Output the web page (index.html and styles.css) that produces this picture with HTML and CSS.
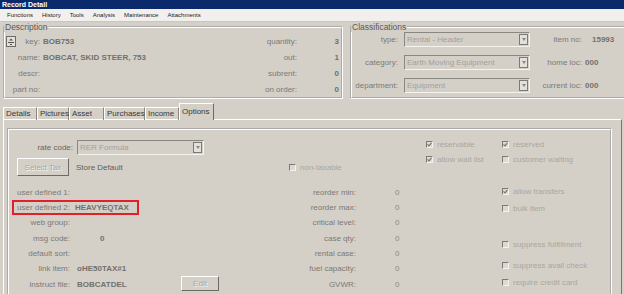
FILE: index.html
```html
<!DOCTYPE html>
<html lang="en">
<head>
    <meta charset="UTF-8">
    <title>Record Detail</title>
    <link rel="stylesheet" href="styles.css">
</head>
<body>
    <div class="titlebar">Record Detail</div>
    <div class="menubar">
        <span>Functions</span>
        <span>History</span>
        <span>Tools</span>
        <span>Analysis</span>
        <span>Maintenance</span>
        <span>Attachments</span>
    </div>

    <div class="top">
        <fieldset class="group desc">
            <legend>Description</legend>
            <div class="desc-grid">
                <div class="lbl key-cell">
                    <span class="key-btn">
                        <svg width="10" height="11" viewBox="0 0 10 11">
                            <rect x="0.5" y="0.5" width="9" height="10" fill="#e2dfda" stroke="#6e6b66"/>
                            <path d="M5 2.5 L7 4.5 L3 4.5 Z" fill="#55524e"/>
                            <path d="M2 6.5 H8" stroke="#55524e"/>
                            <path d="M4 8.5 H6" stroke="#55524e"/>
                        </svg>
                    </span>
                    <span>key:</span>
                </div>
                <div class="val">BOB753</div>
                <div class="lbl">quantity:</div>
                <div class="val num">3</div>

                <div class="lbl">name:</div>
                <div class="val">BOBCAT, SKID STEER, 753</div>
                <div class="lbl">out:</div>
                <div class="val num">1</div>

                <div class="lbl">descr:</div>
                <div class="val"></div>
                <div class="lbl">subrent:</div>
                <div class="val num">0</div>

                <div class="lbl">part no:</div>
                <div class="val"></div>
                <div class="lbl">on order:</div>
                <div class="val num">0</div>
            </div>
        </fieldset>

        <fieldset class="group classif">
            <legend>Classifications</legend>
            <div class="class-grid">
                <div class="lbl">type:</div>
                <div class="select"><span>Rental - Header</span><span class="drop"><i></i></span></div>
                <div class="lbl">item no:</div>
                <div class="val item-no">15993</div>

                <div class="lbl">category:</div>
                <div class="select"><span>Earth Moving Equipment</span><span class="drop"><i></i></span></div>
                <div class="lbl">home loc:</div>
                <div class="val">000</div>

                <div class="lbl">department:</div>
                <div class="select"><span>Equipment</span><span class="drop"><i></i></span></div>
                <div class="lbl">current loc:</div>
                <div class="val">000</div>
            </div>
        </fieldset>
    </div>

    <div class="tabs">
        <div class="tab w-details">Details</div>
        <div class="tab w-pictures">Pictures</div>
        <div class="tab w-asset">Asset</div>
        <div class="tab w-purchases">Purchases</div>
        <div class="tab w-income">Income</div>
        <div class="tab active w-options">Options</div>
    </div>

    <div class="panel">
        <div class="inner">
            <div class="col-left">
                <div class="rate-row">
                    <span class="lbl">rate code:</span>
                    <div class="select rate-select"><span>RER Formula</span><span class="drop"><i></i></span></div>
                </div>
                <div class="tax-row">
                    <button class="btn tax-btn" disabled>Select Tax</button>
                    <span class="store">Store Default</span>
                </div>
                <div class="fields">
                    <div class="field-row"><span class="lbl">user defined 1:</span><span class="val"></span></div>
                    <div class="field-row flag"><span class="lbl">user defined 2:</span><span class="val">HEAVYEQTAX</span></div>
                    <div class="field-row"><span class="lbl">web group:</span><span class="val"></span></div>
                    <div class="field-row"><span class="lbl">msg code:</span><span class="val msg">0</span></div>
                    <div class="field-row"><span class="lbl">default sort:</span><span class="val"></span></div>
                    <div class="field-row"><span class="lbl">link item:</span><span class="val">oHE50TAX#1</span></div>
                    <div class="field-row">
                        <span class="lbl">instruct file:</span><span class="val file">BOBCATDEL</span>
                        <button class="btn edit-btn" disabled>Edit</button>
                    </div>
                </div>
            </div>

            <div class="col-mid">
                <div class="mid-top">
                    <label class="cb"><span class="box"></span>non-taxable</label>
                </div>
                <div class="fields">
                    <div class="field-row"><span class="lbl">reorder min:</span><span class="val">0</span></div>
                    <div class="field-row"><span class="lbl">reorder max:</span><span class="val">0</span></div>
                    <div class="field-row"><span class="lbl">critical level:</span><span class="val">0</span></div>
                    <div class="field-row"><span class="lbl">case qty:</span><span class="val">0</span></div>
                    <div class="field-row"><span class="lbl">rental case:</span><span class="val">0</span></div>
                    <div class="field-row"><span class="lbl">fuel capacity:</span><span class="val">0</span></div>
                    <div class="field-row"><span class="lbl">GVWR:</span><span class="val">0</span></div>
                </div>
            </div>

            <div class="col-right">
                <div class="cb-col first">
                    <label class="cb"><span class="box checked"><svg width="5" height="5" viewBox="0 0 5 5"><path d="M0.5 2.3 L2 3.8 L4.5 0.8" fill="none" stroke="#7a7772" stroke-width="1.2"/></svg></span>reservable</label>
                    <label class="cb"><span class="box checked"><svg width="5" height="5" viewBox="0 0 5 5"><path d="M0.5 2.3 L2 3.8 L4.5 0.8" fill="none" stroke="#7a7772" stroke-width="1.2"/></svg></span>allow wait list</label>
                </div>
                <div class="cb-col">
                    <label class="cb"><span class="box checked"><svg width="5" height="5" viewBox="0 0 5 5"><path d="M0.5 2.3 L2 3.8 L4.5 0.8" fill="none" stroke="#7a7772" stroke-width="1.2"/></svg></span>reserved</label>
                    <label class="cb"><span class="box"></span>customer waiting</label>
                    <label class="cb gap-a"><span class="box checked"><svg width="5" height="5" viewBox="0 0 5 5"><path d="M0.5 2.3 L2 3.8 L4.5 0.8" fill="none" stroke="#7a7772" stroke-width="1.2"/></svg></span>allow transfers</label>
                    <label class="cb gap-b"><span class="box"></span>bulk item</label>
                    <label class="cb gap-c"><span class="box"></span>suppress fulfillment</label>
                    <label class="cb gap-d"><span class="box"></span>suppress avail check</label>
                    <label class="cb gap-e"><span class="box"></span>require credit card</label>
                </div>
            </div>
        </div>
    </div>
</body>
</html>
```

FILE: styles.css
```css
* {
    box-sizing: border-box;
}

body {
    margin: 0;
    width: 624px;
    height: 294px;
    overflow: hidden;
    background-color: #d4d0c8;
    font-family: "Liberation Sans", Arial, sans-serif;
    font-size: 8px;
    color: #7b7976;
}

.titlebar {
    height: 9px;
    line-height: 9px;
    padding-left: 2px;
    background-color: #0b2a6c;
    color: white;
    font-size: 7px;
    font-weight: bold;
}

.menubar {
    display: flex;
    align-items: center;
    gap: 9px;
    height: 13px;
    padding-left: 7px;
    background-color: #f1f0ee;
    border-bottom: 1px solid #c9c6c0;
    font-size: 6px;
    color: #222;
}

/* group boxes */
.top {
    display: flex;
    gap: 7px;
    padding-left: 3px;
}

.group {
    flex-shrink: 0;
    margin: 0;
    padding: 0;
    min-width: 0;
    border: 2px groove #fff;
}

.group legend {
    padding: 0 1px;
    margin-left: -1px;
    line-height: 10px;
    font-size: 8.5px;
    color: #5c5a57;
}

.desc {
    width: 340px;
}

.classif {
    width: 300px;
    padding-bottom: 4px;
}

.desc-grid {
    display: grid;
    grid-template-columns: 35px 191px 60px 39px;
    grid-auto-rows: 16px;
    column-gap: 3px;
    align-items: center;
    padding-top: 1px;
}

.lbl {
    flex-shrink: 0;
    text-align: right;
    white-space: nowrap;
}

.val {
    font-weight: bold;
    color: #72706d;
    white-space: nowrap;
}

.val.num {
    text-align: right;
}

.key-cell {
    display: flex;
    justify-content: space-between;
    align-items: center;
}

.key-btn {
    display: flex;
    margin-left: 1px;
}

.class-grid {
    display: grid;
    grid-template-columns: 46px 126px 46px 40px;
    grid-auto-rows: 15px;
    row-gap: 8px;
    column-gap: 6px;
    align-items: center;
}

.class-grid .val {
    margin-left: -3px;
}

.class-grid .item-no {
    padding-left: 7px;
}

/* dropdowns */
.select {
    display: flex;
    align-items: center;
    justify-content: space-between;
    height: 15px;
    padding-left: 2px;
    border: 1px solid;
    border-color: #8a8680 #f4f3f0 #f4f3f0 #8a8680;
    background-color: #d4d0c8;
    color: #a3a09b;
    white-space: nowrap;
}

.drop {
    display: flex;
    align-items: center;
    justify-content: center;
    width: 9px;
    height: 11px;
    margin-right: 1px;
    border: 1px solid #7d7a75;
    background-color: #e3e1dd;
}

.drop i {
    border-top: 3px solid #8a8783;
    border-left: 2px solid transparent;
    border-right: 2px solid transparent;
}

/* tabs */
.tabs {
    display: flex;
    align-items: flex-end;
    height: 17px;
    margin-top: 4px;
    margin-bottom: -1px;
    padding-left: 3px;
}

.tab {
    height: 13px;
    line-height: 12px;
    padding-left: 2px;
    border-top: 1px solid #fff;
    border-left: 1px solid #fff;
    border-right: 1px solid #8a8680;
    color: #3a3836;
    white-space: nowrap;
    position: relative;
}

.tab.active {
    height: 17px;
    line-height: 15px;
    border-right-color: #6e6b66;
    background-color: #d4d0c8;
    z-index: 1;
}

.w-details { width: 34px; }
.w-pictures { width: 32px; }
.w-asset { width: 35px; }
.w-purchases { width: 41px; }
.w-income { width: 34px; }
.w-options { width: 35px; }

.panel {
    height: 175px;
    margin-left: 3px;
    margin-right: 2px;
    border-top: 1px solid #fff;
    border-left: 1px solid #fff;
    border-right: 1px solid #7a7772;
}

.inner {
    display: flex;
    height: 170px;
    margin: 8px 9px 0 3px;
    border: 2px groove #fff;
    border-bottom: none;
}

/* options content */
.col-left {
    width: 214px;
    padding-top: 10px;
}

.col-mid {
    width: 190px;
    padding-top: 10px;
}

.rate-row {
    display: flex;
    align-items: center;
    gap: 4px;
    height: 15px;
}

.rate-row .lbl {
    width: 64px;
    color: #66645f;
}

.rate-select {
    width: 127px;
}

.tax-row {
    display: flex;
    align-items: center;
    height: 18px;
    margin-top: 3px;
}

.btn {
    font-family: inherit;
    font-size: 8px;
    padding: 0;
    background-color: #d4d0c8;
    border: 1px solid;
    border-color: #fff #6e6b66 #6e6b66 #fff;
    color: #a8a5a0;
    text-shadow: 1px 1px 0 #f4f3f0;
}

.tax-btn {
    width: 52px;
    height: 18px;
    margin-left: 8px;
}

.store {
    margin-left: 7px;
    color: #5e5c59;
}

.fields {
    margin-top: 8.67px;
}

.field-row {
    display: flex;
    align-items: center;
    height: 15.33px;
}

.col-left .field-row {
    gap: 7px;
}

.col-left .field-row .lbl {
    width: 61px;
}

.field-row.flag {
    width: 127px;
    margin-left: 3px;
    border: 2px solid #e0202a;
}

.col-left .field-row.flag {
    gap: 5px;
}

.col-left .field-row.flag .lbl {
    width: 56px;
}

.col-left .val {
    width: 97px;
}

.col-left .field-row.flag .val {
    width: auto;
}

.val.msg {
    padding-left: 23px;
}

.edit-btn {
    width: 38px;
    height: 15px;
    margin-top: -1px;
}

.mid-top {
    height: 36px;
    padding-top: 18px;
    padding-left: 66px;
}

.col-mid .field-row {
    gap: 4px;
}

.col-mid .lbl {
    width: 133px;
}

.col-mid .val {
    padding-left: 35px;
    font-weight: normal;
    color: #8a8884;
}

/* checkboxes */
.col-right {
    display: flex;
    padding-top: 7px;
    padding-left: 13px;
}

.cb-col.first {
    width: 76px;
}

.cb {
    display: flex;
    align-items: center;
    gap: 4px;
    height: 15px;
    color: #a9a6a1;
    white-space: nowrap;
}

.mid-top .cb {
    height: 18px;
}

.box {
    display: flex;
    align-items: center;
    justify-content: center;
    width: 7px;
    height: 7px;
    border: 1px solid;
    border-color: #7d7a75 #f4f3f0 #f4f3f0 #7d7a75;
    background-color: #dcd9d3;
}

.gap-a { margin-top: 17px; }
.gap-b { margin-top: 2px; }
.gap-c { margin-top: 21px; }
.gap-d { margin-top: 6px; }
.gap-e { margin-top: 2px; }
```
